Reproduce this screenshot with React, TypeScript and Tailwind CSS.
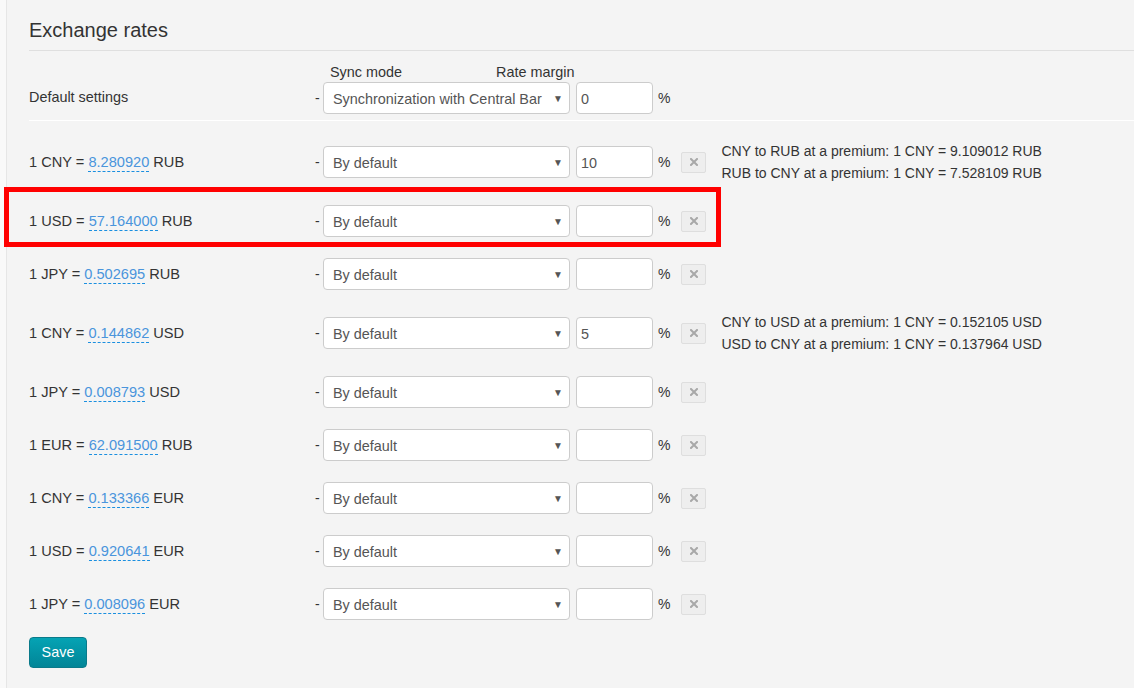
import React from "react";

type Row = {
  from: string;
  rate: string;
  to: string;
  margin: string;
  notes?: string[];
  highlight?: boolean;
};

const rows: Row[] = [
  {
    from: "CNY",
    rate: "8.280920",
    to: "RUB",
    margin: "10",
    notes: [
      "CNY to RUB at a premium: 1 CNY = 9.109012 RUB",
      "RUB to CNY at a premium: 1 CNY = 7.528109 RUB",
    ],
  },
  { from: "USD", rate: "57.164000", to: "RUB", margin: "", highlight: true },
  { from: "JPY", rate: "0.502695", to: "RUB", margin: "" },
  {
    from: "CNY",
    rate: "0.144862",
    to: "USD",
    margin: "5",
    notes: [
      "CNY to USD at a premium: 1 CNY = 0.152105 USD",
      "USD to CNY at a premium: 1 CNY = 0.137964 USD",
    ],
  },
  { from: "JPY", rate: "0.008793", to: "USD", margin: "" },
  { from: "EUR", rate: "62.091500", to: "RUB", margin: "" },
  { from: "CNY", rate: "0.133366", to: "EUR", margin: "" },
  { from: "USD", rate: "0.920641", to: "EUR", margin: "" },
  { from: "JPY", rate: "0.008096", to: "EUR", margin: "" },
];

function Select({ value }: { value: string }) {
  return (
    <div className="flex h-[32px] w-[247px] shrink-0 items-center rounded-[4px] border border-[#cccccc] bg-white pl-[9px] pr-[6px] pt-[2px] text-[14.4px] leading-[20px] text-[#555555]">
      <span className="flex-1 whitespace-nowrap">{value}</span>
      <span className="ml-[4px] text-[10px] text-[#555555]">▼</span>
    </div>
  );
}

function MarginInput({ value }: { value: string }) {
  return (
    <div className="ml-[6px] flex h-[32px] w-[77px] shrink-0 items-center rounded-[4px] border border-[#cccccc] bg-white pl-[4px] pt-[2px] text-[14.4px] leading-[20px] text-[#555555]">
      {value}
    </div>
  );
}

function RemoveButton() {
  return (
    <div className="ml-[11px] flex h-[21px] w-[25px] shrink-0 items-center justify-center rounded-[2px] border border-[#dedede] bg-[#eeeeee]">
      <svg width="8" height="8" viewBox="0 0 8 8">
        <path d="M1 1 L7 7 M7 1 L1 7" stroke="#a8a8a8" strokeWidth="2" strokeLinecap="square" />
      </svg>
    </div>
  );
}

export default function App() {
  return (
    <div
      className="flex min-h-[688px] w-[1134px] bg-[#f9f9f9] text-[14px] text-[#333333]"
      style={{ fontFamily: '"Liberation Sans", Arial, sans-serif' }}
    >
      <div className="w-[6px] shrink-0" />
      <div className="flex-1 border-l border-[#e6e6e6] bg-[#f4f4f4] pl-[22px] pb-[20px]">
        <h2 className="border-b border-[#dfdfdf] pt-[16px] pb-[6px] text-[20px] leading-[28px] text-[#333333]">
          Exchange rates
        </h2>

        <div className="mt-[11px] flex h-[20px] items-center text-[14.4px] leading-[20px]">
          <div className="w-[301px] shrink-0" />
          <span className="w-[166px] shrink-0">Sync mode</span>
          <span>Rate margin</span>
        </div>

        <div className="flex items-center border-b border-white pb-[6px]">
          <div className="w-[286px] shrink-0 text-[14.4px]">Default settings</div>
          <span className="w-[8px] shrink-0">-</span>
          <Select value="Synchronization with Central Bar" />
          <MarginInput value="0" />
          <span className="ml-[5px]">%</span>
        </div>

        <div className="mt-[19px] flex flex-col gap-[21px]">
          {rows.map((r, i) => (
            <div key={i} className="relative flex items-center">
              {r.highlight && (
                <div className="pointer-events-none absolute left-[-25px] top-[-18px] h-[60px] w-[717px] border-[5px] border-[#ff0000]" />
              )}
              <div className="w-[286px] shrink-0 text-[14.6px] leading-[20px]">
                1 {r.from} ={" "}
                <span className="border-b border-dashed border-[#1a8fe0] pb-[1px] text-[#4a95dc]">
                  {r.rate}
                </span>{" "}
                {r.to}
              </div>
              <span className="w-[8px] shrink-0">-</span>
              <Select value="By default" />
              <MarginInput value={r.margin} />
              <span className="ml-[5px]">%</span>
              <RemoveButton />
              {r.notes && (
                <div className="ml-[15px] text-[14px] leading-[22px] text-[#333333]">
                  {r.notes.map((n, j) => (
                    <div key={j}>{n}</div>
                  ))}
                </div>
              )}
            </div>
          ))}
        </div>

        <button className="mt-[17px] h-[31px] w-[58px] rounded-[4px] border border-[#0a7a8a] bg-gradient-to-b from-[#05a3b4] to-[#028597] text-[14.4px] text-white">
          Save
        </button>
      </div>
    </div>
  );
}
